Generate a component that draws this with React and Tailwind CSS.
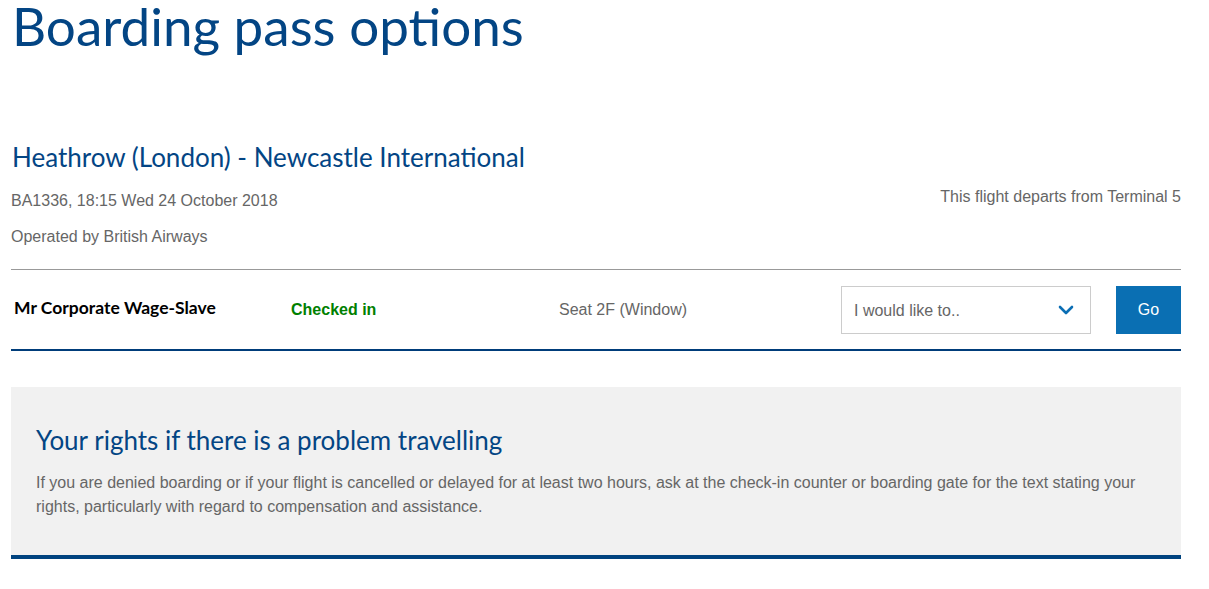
export default function App() {
  const heading = { fontFamily: "Lato, 'Open Sans', sans-serif" };
  const arial = { fontFamily: "'Liberation Sans', Arial, sans-serif" };
  return (
    <div className="w-[1209px] h-[589px] bg-white overflow-hidden">
      <div className="w-[1170px] ml-[11px]">
        <h1 className="text-[53px] leading-[52px] text-[#034584] pl-[1px]" style={heading}>
          Boarding pass options
        </h1>
        <div className="mt-[89px]">
          <h2 className="text-[26px] leading-[32px] text-[#034584] pl-[1px]" style={heading}>
            Heathrow (London) - Newcastle International
          </h2>
          <div className="flex justify-between mt-[16px] text-[16px] text-[#666]" style={arial}>
            <div className="flex flex-col gap-[12px] leading-[24px]">
              <span>BA1336, 18:15 Wed 24 October 2018</span>
              <span>Operated by British Airways</span>
            </div>
            <span className="leading-[24px] -mt-[4px]">This flight departs from Terminal 5</span>
          </div>
        </div>
        <div className="mt-[20px] border-t border-[#999] h-[82px] border-b-2 border-b-[#003d7a] flex items-center">
          <div className="w-[280px] pl-[3px] text-[17.5px] font-bold text-black -mt-[2px]" style={heading}>
            Mr Corporate Wage-Slave
          </div>
          <div className="w-[268px] text-[16px] font-bold text-[#008000] mt-[1px]" style={arial}>
            Checked in
          </div>
          <div className="w-[282px] text-[16px] text-[#666]" style={arial}>
            Seat 2F (Window)
          </div>
          <div className="w-[250px] h-[48px] border border-[#ccc] flex items-center justify-between pl-[12px] pr-[16px] text-[16px] text-[#666]" style={arial}>
            <span className="mt-[2px]">I would like to..</span>
            <svg width="16" height="10" viewBox="0 0 16 10" fill="none">
              <path d="M2 2l6 6 6-6" stroke="#0b6eb4" strokeWidth="2.6" strokeLinecap="round" strokeLinejoin="round" />
            </svg>
          </div>
          <button className="ml-[25px] w-[65px] h-[48px] bg-[#0a6fb3] text-white text-[16px]" style={arial}>
            Go
          </button>
        </div>
        <div className="mt-[36px] bg-[#f1f1f1] border-b-4 border-[#00437f] h-[172px] pl-[25px] pt-[38px]">
          <h3 className="text-[26px] leading-[30px] text-[#034584]" style={heading}>
            Your rights if there is a problem travelling
          </h3>
          <p className="mt-[16px] text-[16px] leading-[24px] text-[#666] pr-[40px]" style={arial}>
            If you are denied boarding or if your flight is cancelled or delayed for at least two hours, ask at the check-in counter or boarding gate for the text stating your rights, particularly with regard to compensation and assistance.
          </p>
        </div>
      </div>
    </div>
  );
}
